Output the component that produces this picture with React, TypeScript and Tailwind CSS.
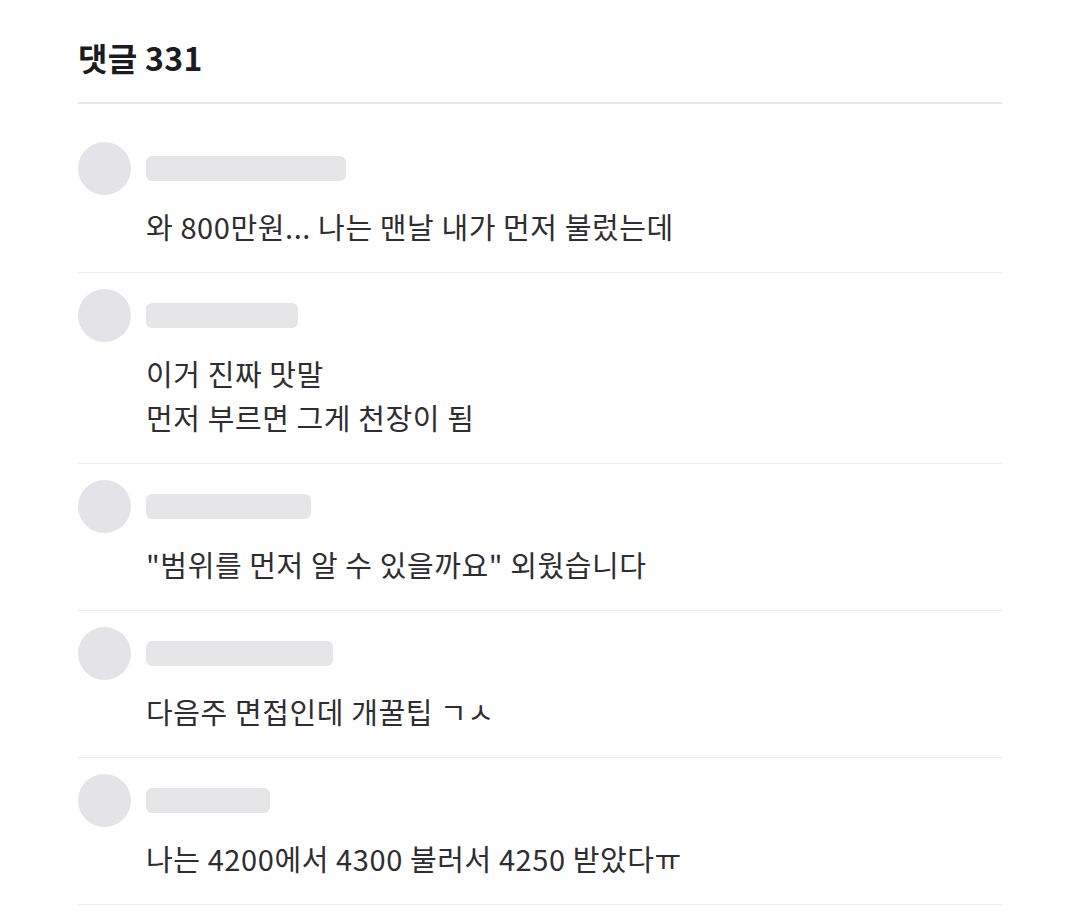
import React from 'react';

type Comment = {
  id: number;
  nameWidth: number;
  lines: string[];
};

const comments: Comment[] = [
  { id: 1, nameWidth: 200, lines: ['와 800만원... 나는 맨날 내가 먼저 불렀는데'] },
  { id: 2, nameWidth: 152, lines: ['이거 진짜 맛말', '먼저 부르면 그게 천장이 됨'] },
  { id: 3, nameWidth: 165, lines: ['"범위를 먼저 알 수 있을까요" 외웠습니다'] },
  { id: 4, nameWidth: 187, lines: ['다음주 면접인데 개꿀팁 ㄱㅅ'] },
  { id: 5, nameWidth: 124, lines: ['나는 4200에서 4300 불러서 4250 받았다ㅠ'] },
];

function CommentItem({ comment }: { comment: Comment }) {
  return (
    <li className="border-b border-[#ececee] pt-4 pb-[24px]">
      <div className="flex items-center gap-[15px]">
        {/* 프로필 자리 */}
        <div className="h-[53px] w-[53px] shrink-0 rounded-full bg-[#e4e4e8]" />
        <div className="h-[25px] rounded-md bg-[#e6e6e9]" style={{ width: comment.nameWidth }} />
      </div>
      <div className="mt-[9px] pl-[68px] text-[29px] leading-[44px] tracking-[0.6px] text-[#2e2e30]">
        {comment.lines.map((line, i) => (
          <p key={i}>{line}</p>
        ))}
      </div>
    </li>
  );
}

export default function App() {
  return (
    <div
      className="min-h-[916px] bg-white px-[78px]"
      style={{ fontFamily: '"Noto Sans CJK KR", "Noto Sans", sans-serif' }}
    >
      <div className="w-[924px]">
        <h2 className="flex h-[102px] items-center pt-3 text-[32px] font-bold tracking-[0.3px] text-[#1c1c1e]">
          댓글 331
        </h2>
        <div className="h-[2px] bg-[#e6e6e8]" />
        <ul className="mt-[22px]">
          {comments.map((c) => (
            <CommentItem key={c.id} comment={c} />
          ))}
        </ul>
      </div>
    </div>
  );
}
